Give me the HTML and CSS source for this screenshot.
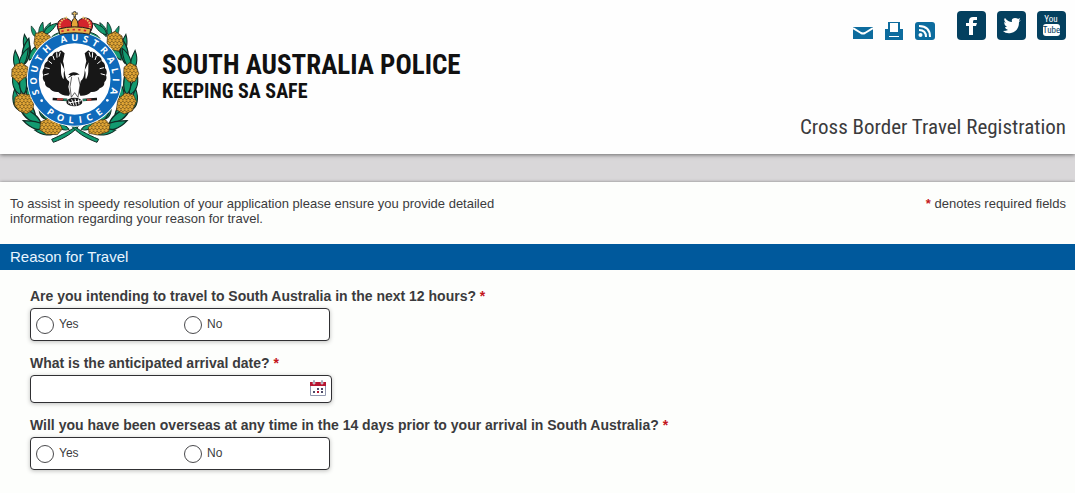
FILE: index.html
```html
<!DOCTYPE html>
<html lang="en">
<head>
  <meta charset="UTF-8" />
  <meta name="viewport" content="width=device-width, initial-scale=1.0" />
  <title>Cross Border Travel Registration</title>
  <link rel="stylesheet" href="styles.css">
</head>
<body>
  <header class="header">
    <div class="brand">
      <svg class="crest" viewBox="30 30 393 402" aria-hidden="true">
        <defs>
          <pattern id="berries" width="11" height="18" patternUnits="userSpaceOnUse">
            <rect width="11" height="18" fill="#4a3410" />
            <circle cx="5.500" cy="4.500" r="5" fill="#e0a535" />
            <circle cx="0" cy="13.500" r="5" fill="#e0a535" />
            <circle cx="11" cy="13.500" r="5" fill="#e0a535" />
          </pattern>
          <path id="leaf" d="M0 0C-13-12-12-36 3-58C9-34 11-14 0 0Z" />
          <g id="wreath" fill="#139a70" stroke="#102c24" stroke-width="3">
            <use href="#leaf" transform="translate(132 110) rotate(22) scale(.8)" />
            <use href="#leaf" transform="translate(132 104) rotate(46) scale(.9)" />
            <use href="#leaf" transform="translate(122 112) rotate(5) scale(.8)" />
            <use href="#leaf" transform="translate(148 126) rotate(52) scale(.9)" />
            <use href="#leaf" transform="translate(110 112) rotate(-28) scale(.65)" />
            <use href="#leaf" transform="translate(90 165) rotate(-18) scale(1.1)" />
            <use href="#leaf" transform="translate(76 190) rotate(5) scale(1.3)" />
            <use href="#leaf" transform="translate(88 180) rotate(34) scale(1.1)" />
            <use href="#leaf" transform="translate(58 214) rotate(-14) scale(1.1)" />
            <use href="#leaf" transform="translate(62 204) rotate(18) scale(1.1)" />
            <use href="#leaf" transform="translate(62 284) rotate(-24) scale(1.1)" />
            <use href="#leaf" transform="translate(72 284) rotate(-3) scale(1.3)" />
            <use href="#leaf" transform="translate(84 302) rotate(14) scale(1.2)" />
            <use href="#leaf" transform="translate(56 330) rotate(-14) scale(1.1)" />
            <use href="#leaf" transform="translate(106 356) rotate(-30) scale(1.3)" />
            <use href="#leaf" transform="translate(122 368) rotate(-56) scale(1.4)" />
            <use href="#leaf" transform="translate(142 384) rotate(-76) scale(1.3)" />
            <use href="#leaf" transform="translate(132 356) rotate(-12)" />
            <use href="#leaf" transform="translate(178 374) rotate(-60) scale(1.1)" />
            <use href="#leaf" transform="translate(168 396) rotate(-88) scale(1.1)" />
            <use href="#leaf" transform="translate(207 388) rotate(-68) scale(.9)" />
            <path d="M155 418C190 403 218 387 242 371C222 398 193 415 160 427Z" />
          </g>
          <path id="ring-top" d="M136.7 310.3A114 114 0 1 1 311.3 310.3" />
          <path id="ring-bottom" d="M108.8 303.5A133 133 0 0 0 339.2 303.5" />
          <g id="wing">
            <path d="M207 287C194 288 181 283 175 276C164 277 153 273 149 265C139 262 134 255 135 247C128 241 127 232 130 226C126 218 127 210 133 204C131 194 136 187 143 183C142 174 148 168 157 167C160 158 168 154 176 156L183 151L194 160L189 184C197 209 190 233 207 244L218 262Z" />
            <path d="M181 156L177 170M170 157L171 173M159 168L163 180M146 183L156 191M136 203L149 206M132 225L146 221" fill="none" stroke="#fff" stroke-width="3" />
            <path d="M182 187C185 207 179 220 190 238C194 230 188 220 194 211Z" fill="#fff" />
          </g>
        </defs>
        <use href="#wreath" />
        <use href="#wreath" transform="translate(451 0) scale(-1 1)" />
        <g fill="url(#berries)" stroke="#3b2b10" stroke-width="2">
          <path d="M106 101L126 94L150 108L151 123L128 154L108 147L102 130Z" />
          <path d="M48 193L65 188L84 202L82 227L55 248L35 230L36 208Z" />
          <path d="M45 292L62 281L88 284L103 303L98 329L80 341L57 333L43 315Z" />
          <path d="M122 366L144 355L176 366L187 387L172 404L139 403L119 389Z" />
          <path d="M323 105L345 94L366 108L370 134L355 154L333 148L321 128Z" />
          <path d="M372 202L389 188L409 198L416 221L405 245L386 246L371 226Z" />
          <path d="M354 297L376 279L401 285L409 304L397 333L372 342L349 329Z" />
          <path d="M265 382L290 361L315 358L330 374L326 395L293 405L267 400Z" />
        </g>
        <circle cx="224" cy="237" r="143" fill="#fff" />
        <circle cx="224" cy="237" r="124" fill="#fff" stroke="#0f6abb" stroke-width="33" />
        <text class="ring-text"><textPath href="#ring-top"><tspan x="42 74 107 139 173 200 227 259 289 318 350 382 414 440 472">SOUTH AUSTRALIA</tspan></textPath></text>
        <text class="ring-text"><textPath href="#ring-bottom"><tspan x="56 93 128 158 188 223">POLICE</tspan></textPath></text>
        <circle cx="125" cy="302" r="4" fill="#fff" />
        <circle cx="322" cy="301" r="4" fill="#fff" />
        <g fill="#171717">
          <use href="#wing" />
          <use href="#wing" transform="translate(448 0) scale(-1 1)" />
        </g>
        <path d="M195 174C204 156 242 156 252 174C261 192 251 215 240 224L242 244L232 291H212L205 260L211 234C196 221 187 195 195 174Z" fill="#fff" />
        <path d="M205 225C214 213 231 215 240 226C233 222 227 228 219 226L203 235L212 225Z" fill="#171717" />
        <path d="M215 231L210 260L214 292L224 278L234 292L240 255L235 232" fill="#fff" stroke="#171717" stroke-width="2" />
        <path d="M158 297L202 300M248 300L291 297" stroke="#171717" stroke-width="7" />
        <path d="M171 298H189M261 299H274" stroke="#bd403b" stroke-width="6" />
        <path d="M190 299H201M249 300H259" stroke="#227e61" stroke-width="6" />
        <ellipse cx="223" cy="306" rx="24" ry="13" fill="#171717" />
        <path d="M205 302L215 316M215 298L222 317M225 296L229 317M235 298L237 313M204 309L244 302" stroke="#fff" stroke-width="3" />
        <g stroke="#20191a" stroke-width="3">
          <path d="M178 96C167 78 172 62 187 56C205 50 214 65 224 77C234 61 247 49 265 56C281 63 281 80 271 96Z" fill="#d3242c" />
          <path d="M183 94C175 76 178 60 203 52M265 94C275 76 270 60 246 52" fill="none" stroke="#ecc46a" stroke-width="6" stroke-dasharray="5 3" />
          <path d="M218 91C211 75 214 61 224 53C234 61 238 76 230 91Z" fill="#e4a638" />
          <path d="M224 34V53M215 41H233" stroke="#37352d" stroke-width="7" />
          <path d="M224 36V49M218 41H230" stroke="#e8bf64" stroke-width="3" />
          <path d="M176 87Q224 74 272 87L269 103Q224 94 179 103Z" fill="#e6b24e" />
        </g>
        <path d="M184 94Q224 84 266 94" fill="none" stroke="#d3242c" stroke-width="5" stroke-dasharray="7 10" />
      </svg>
      <div class="brand-text">
        <div class="brand-name">SOUTH AUSTRALIA POLICE</div>
        <div class="brand-tagline">KEEPING SA SAFE</div>
      </div>
    </div>

    <div class="header-side">
      <nav class="links" aria-label="Share">
        <a href="#" class="tool" aria-label="Email">
          <svg width="20" height="18" viewBox="0 0 20 18"><path d="M0 5H20V17H0Z" fill="#0d6c9e" /><path d="M0 6L8 11Q10 12 12 11L20 6" fill="none" stroke="#fff" stroke-width="2" /></svg>
        </a>
        <a href="#" class="tool" aria-label="Print">
          <svg width="18" height="18" viewBox="0 0 18 18"><path d="M3 0H15V7H18V18H0V7H3Z" fill="#0d6c9e" /><path d="M5 1H13V10H5ZM4 14H14V15H4Z" fill="#fff" /></svg>
        </a>
        <a href="#" class="tool" aria-label="RSS">
          <svg width="20" height="18" viewBox="0 0 20 18"><rect width="20" height="18" rx="3" fill="#0d6c9e" /><circle cx="5.500" cy="13" r="2" fill="#fff" /><path d="M4 8Q11 8 11 15M4 4Q15 4 15 15" fill="none" stroke="#fff" stroke-width="2" /></svg>
        </a>
        <a href="#" class="social" aria-label="Facebook">
          <svg width="29" height="29" viewBox="0 0 29 29"><rect width="29" height="29" rx="4" fill="#04405f" /><path d="M12 24V15H9V12H12V10Q12 6 16 6H20V9H17Q16 9 16 11V12H20L19 15H16V24Z" fill="#fff" /></svg>
        </a>
        <a href="#" class="social" aria-label="Twitter">
          <svg width="29" height="29" viewBox="0 0 29 29"><rect width="29" height="29" rx="4" fill="#04405f" /><path d="M6 20Q9 20 11 19Q8 18 8 16H10Q7 14 7 11L9 12Q6 9 8 7Q11 11 15 11Q14 7 18 7Q20 7 21 8L23 7L22 10L24 9L22 11Q22 20 14 22Q9 23 6 20Z" fill="#fff" /></svg>
        </a>
        <a href="#" class="social" aria-label="YouTube">
          <svg width="29" height="29" viewBox="0 0 29 29"><rect width="29" height="29" rx="4" fill="#04405f" /><rect x="6" y="13" width="17" height="12" rx="3" fill="#fff" /><text class="tube" x="14" y="11" fill="#fff">You</text><text class="tube" x="14.500" y="22" fill="#04405f">Tube</text></svg>
        </a>
      </nav>
      <h1>Cross Border Travel Registration</h1>
    </div>
  </header>

  <main class="content">
    <div class="intro">
      <p class="intro-text">To assist in speedy resolution of your application please ensure you provide detailed information regarding your reason for travel.</p>
      <p><span class="required">*</span> denotes required fields</p>
    </div>

    <h2>Reason for Travel</h2>

    <form>
      <fieldset>
        <legend>Are you intending to travel to South Australia in the next 12 hours? <span class="required">*</span></legend>
        <div class="choices">
          <label><input type="radio" name="next12" value="yes" />Yes</label>
          <label><input type="radio" name="next12" value="no" />No</label>
        </div>
      </fieldset>

      <div class="field">
        <label class="question" for="arrival">What is the anticipated arrival date? <span class="required">*</span></label>
        <div class="date-box">
          <input type="text" id="arrival" name="arrival" />
          <button type="button" aria-label="Choose date">
            <svg width="16" height="18" viewBox="0 0 16 18"><path d="M.5 3V15.500H15.500V3" fill="#fff" stroke="#9298b0" /><path d="M0 2H16V6H0Z" fill="#b51632" /><path d="M3 0H5V4H3ZM11 0H13V4H11Z" fill="#8d91a6" stroke="#fff" stroke-width=".5" /><path d="M7 8H9V10H7ZM11 8H13V10H11ZM3 11H5V13H3ZM11 11H13V13H11Z" fill="#4e4a69" /><path d="M7 11H9V13H7Z" fill="#b51632" /></svg>
          </button>
        </div>
      </div>

      <fieldset>
        <legend>Will you have been overseas at any time in the 14 days prior to your arrival in South Australia? <span class="required">*</span></legend>
        <div class="choices">
          <label><input type="radio" name="overseas" value="yes" />Yes</label>
          <label><input type="radio" name="overseas" value="no" />No</label>
        </div>
      </fieldset>
    </form>
  </main>
</body>
</html>
```
FILE: styles.css
```css
* {
  box-sizing: border-box;
}

body {
  margin: 0;
  font-family: "Liberation Sans", Arial, sans-serif;
  font-size: 13px;
  line-height: 15px;
  color: #3b3b3d;
  background: #d9d7d9;
}

h1, h2, p {
  margin: 0;
}

.header {
  display: flex;
  justify-content: space-between;
  height: 154px;
  padding: 10px 9px 10px 10px;
  background: #fefefe;
  box-shadow: 0 1px 4px rgba(0, 0, 0, 0.5);
}

.brand {
  display: flex;
  gap: 21px;
}

.crest {
  display: block;
  width: 131px;
  height: 134px;
}

.ring-text {
  font-family: "Open Sans", sans-serif;
  font-size: 28px;
  font-weight: bold;
  text-anchor: middle;
  fill: #fff;
}

.brand-text {
  padding-top: 39px;
  color: #111;
  font-family: "Roboto Condensed", "Arial Narrow", sans-serif;
  font-weight: bold;
}

.brand-name {
  font-size: 27px;
  line-height: 32px;
}

.brand-tagline {
  font-size: 20px;
  line-height: 20px;
}

.header-side {
  display: flex;
  flex-direction: column;
  align-items: flex-end;
  justify-content: space-between;
}

.links {
  display: flex;
  align-items: flex-end;
  padding-top: 1px;
}

.links svg {
  display: block;
}

.tool {
  margin-right: 12px;
}

.social {
  margin-left: 10px;
}

.social + .social {
  margin-left: 11px;
}

.tube {
  font-family: "Roboto Condensed", "Arial Narrow", sans-serif;
  font-size: 9px;
  text-anchor: middle;
}

h1 {
  font-family: "Roboto Condensed", "Arial Narrow", sans-serif;
  font-size: 21px;
  font-weight: normal;
  line-height: 34px;
}

.content {
  min-height: 311px;
  margin-top: 28px;
  background: #fdfefc;
  box-shadow: 0 0 3px rgba(0, 0, 0, 0.4);
}

.intro {
  display: flex;
  justify-content: space-between;
  padding: 14px 9px 18px 10px;
}

.intro-text {
  max-width: 510px;
}

.required {
  color: #c4161c;
  font-weight: bold;
}

h2 {
  padding: 0 10px;
  background: #00599c;
  color: #e8f5ff;
  font-size: 15px;
  font-weight: normal;
  line-height: 26px;
}

form {
  display: flex;
  flex-direction: column;
  gap: 14px;
  padding: 18px 30px;
}

fieldset {
  margin: 0;
  padding: 0;
  border: 0;
}

legend, .question {
  display: block;
  padding: 0;
  font-size: 14px;
  font-weight: bold;
  line-height: 16px;
}

.choices, .date-box {
  display: flex;
  align-items: center;
  max-width: 300px;
  margin-top: 4px;
  border: 1px solid #303033;
  border-radius: 4px;
  background: #fff;
  box-shadow: 0 1px 4px rgba(0, 0, 0, 0.25);
}

.choices {
  height: 33px;
  padding-left: 5px;
}

.choices label {
  display: flex;
  align-items: center;
  gap: 5px;
  width: 148px;
  font-size: 12px;
}

.choices label + label {
  width: auto;
}

.choices input {
  appearance: none;
  width: 18px;
  height: 18px;
  margin: 0;
  border: 1px solid #4a4a4d;
  border-radius: 50%;
  background: #fff;
}

.choices input:checked {
  background: #303033;
  box-shadow: inset 0 0 0 4px #fff;
}

.date-box {
  max-width: 302px;
  height: 28px;
  padding-right: 5px;
}

.date-box input {
  flex: 1;
  min-width: 0;
  height: 24px;
  padding: 0 6px;
  border: 0;
  background: none;
  font: inherit;
}

.date-box button {
  padding: 0;
  border: 0;
  background: none;
  cursor: pointer;
}

.date-box svg {
  display: block;
}

@media (max-width: 600px) {
  .header {
    height: auto;
    flex-direction: column;
    gap: 12px;
  }
}
```
